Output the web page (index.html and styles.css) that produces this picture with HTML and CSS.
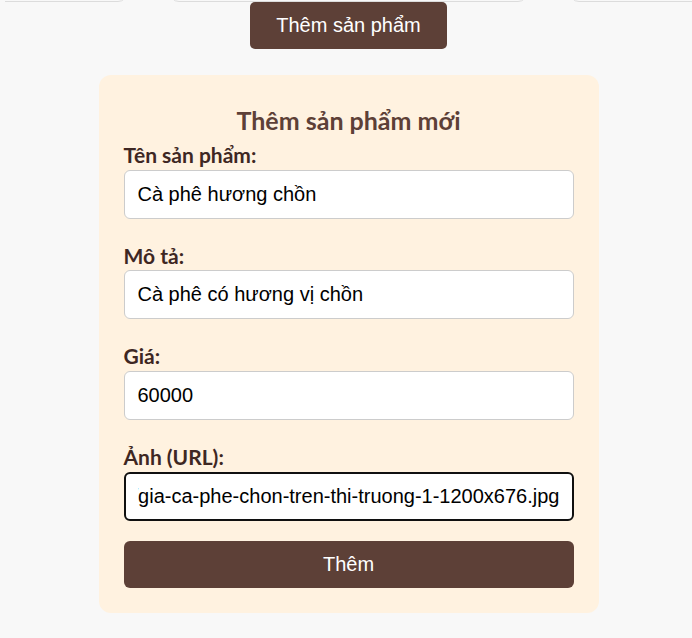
FILE: index.html
```html
<!DOCTYPE html>
<html lang="vi">
<head>
<meta charset="utf-8">
<title>Thêm sản phẩm</title>
<link rel="stylesheet" href="styles.css">
</head>
<body>
  <div class="product-row">
    <div class="product-card"></div>
    <div class="product-card"></div>
    <div class="product-card"></div>
  </div>
  <div class="toggle-wrap">
    <button class="toggle-btn" type="button">Thêm sản phẩm</button>
  </div>
  <form class="add-form">
    <h2 class="form-title">Thêm sản phẩm mới</h2>
    <label class="field-label" for="name">Tên sản phẩm:</label>
    <input class="field-input" id="name" type="text" value="Cà phê hương chồn">
    <label class="field-label" for="desc">Mô tả:</label>
    <input class="field-input" id="desc" type="text" value="Cà phê có hương vị chồn">
    <label class="field-label" for="price">Giá:</label>
    <input class="field-input" id="price" type="text" value="60000">
    <label class="field-label" for="img">Ảnh (URL):</label>
    <input class="field-input" id="img" type="text" value="https://caphe.vn/wp-content/uploads/2023/05/gia-ca-phe-chon-tren-thi-truong-1-1200x676.jpg">
    <button class="submit-btn" type="button">Thêm</button>
  </form>
  <script src="script.js"></script>
</body>
</html>
```
FILE: styles.css
```css
html, body {
  margin: 0;
  padding: 0;
}
body {
  background: #f8f8f8;
  font-family: "Liberation Sans", Arial, sans-serif;
  padding-left: 5px;
  overflow: hidden;
}
.product-row {
  display: flex;
  justify-content: center;
  gap: 41px;
  height: 2px;
  overflow: hidden;
}
.product-card {
  flex: 0 0 359px;
  height: 12px;
  margin-top: -10px;
  background: #f8f8f8;
  border: 1px solid #dcdcdc;
  border-radius: 0 0 10px 10px;
  box-sizing: border-box;
}
.toggle-wrap {
  display: flex;
  justify-content: center;
}
.toggle-btn {
  background: #5d4037;
  color: #fff;
  border: none;
  border-radius: 5px;
  font-family: "Liberation Sans", Arial, sans-serif;
  font-size: 20px;
  height: 47px;
  padding: 0 26px;
  cursor: pointer;
}
.add-form {
  width: 500px;
  box-sizing: border-box;
  margin: 26px auto 0;
  background: #fff2e0;
  border-radius: 12px;
  padding: 30px 25px 25px;
  display: flex;
  flex-direction: column;
}
.form-title {
  margin: 0 0 8px;
  text-align: center;
  font-family: Lato, "Noto Sans", sans-serif;
  font-weight: 700;
  font-size: 25px;
  line-height: 30px;
  color: #5d4037;
}
.field-label {
  font-family: Lato, "Noto Sans", sans-serif;
  font-weight: 700;
  font-size: 21px;
  line-height: 23.67px;
  color: #3e2723;
  margin-bottom: 3px;
}
.field-input {
  height: 49px;
  box-sizing: border-box;
  border: 1px solid #cccccc;
  border-radius: 6px;
  background: #fff;
  padding: 0 13px;
  font-family: "Liberation Sans", Arial, sans-serif;
  font-size: 20px;
  color: #000;
  margin-bottom: 25px;
  outline: none;
}
.field-input:focus {
  border: 2px solid #101010;
  padding: 0 12px;
}
.submit-btn {
  margin-top: -5px;
  height: 47px;
  background: #5d4037;
  color: #fff;
  border: none;
  border-radius: 6px;
  font-family: "Liberation Sans", Arial, sans-serif;
  font-size: 20px;
  cursor: pointer;
}
```
FILE: script.js
```js
var img = document.getElementById('img');
img.focus();
var len = img.value.length;
img.setSelectionRange(len, len);
img.scrollLeft = img.scrollWidth;
```
